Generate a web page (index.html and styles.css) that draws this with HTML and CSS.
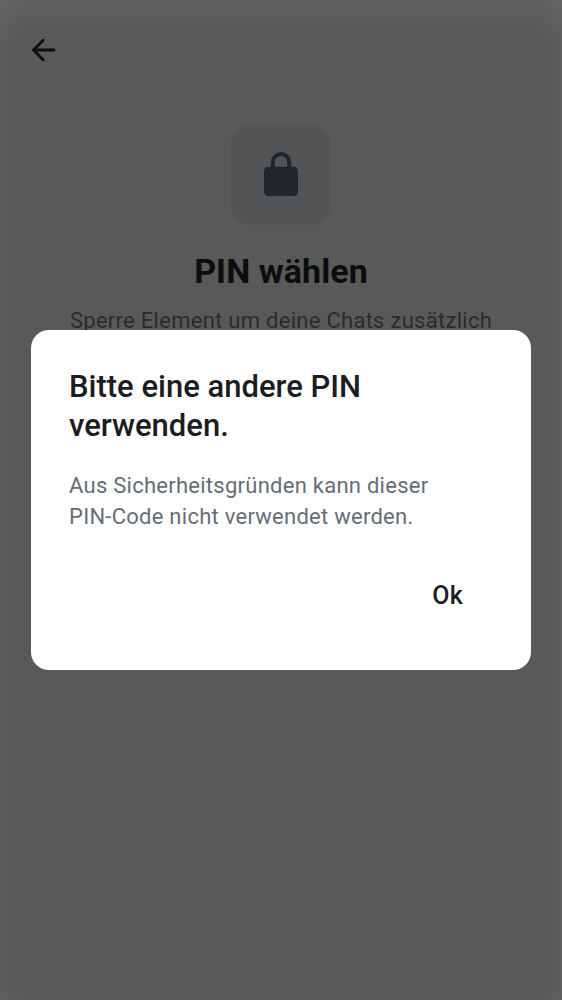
FILE: index.html
```
<!DOCTYPE html>
<html lang="de">
<head>
<meta charset="utf-8">
<title>PIN wählen</title>
<link rel="stylesheet" href="styles.css">
</head>
<body>
<main class="screen">
  <header class="topbar">
    <svg class="back" viewBox="0 0 28 28" aria-label="Zurück"><path d="M25 14H5M14.2 4.3L4.5 14l9.7 9.7"/></svg>
  </header>
  <section class="intro">
    <div class="tile">
      <svg class="lock" viewBox="0 0 34 44"><path class="shackle" d="M8.8 17V10.2a8.2 8.2 0 0 1 16.4 0V17"/><rect y="14.7" width="34" height="29.3" rx="4.5"/></svg>
    </div>
    <h1 class="title">PIN wählen</h1>
    <p class="subtitle">Sperre Element um deine Chats zusätzlich</p>
  </section>
</main>
<div class="scrim">
  <div class="dialog" role="alertdialog">
    <h2 class="heading">Bitte eine andere PIN<br>verwenden.</h2>
    <p class="message">Aus Sicherheitsgründen kann dieser<br>PIN-Code nicht verwendet werden.</p>
    <div class="actions"><button class="ok">Ok</button></div>
  </div>
</div>
</body>
</html>
```
FILE: styles.css
```
* { box-sizing: border-box; }
body { margin: 0; height: 1000px; overflow: hidden; font-family: Roboto, sans-serif; background: #595959; }
h1, h2, p { margin: 0; }
.screen {
  height: 1000px;
  background:
    linear-gradient(to bottom, rgba(255, 255, 255, .045), transparent 38px),
    linear-gradient(to right, rgba(255, 255, 255, .03), transparent 26px),
    linear-gradient(to left, rgba(255, 255, 255, .03), transparent 26px),
    linear-gradient(to top, rgba(255, 255, 255, .01), transparent 8px);
}
.topbar { height: 125px; padding: 36px 0 0 29px; }
.back { display: block; width: 28px; height: 28px; fill: none; stroke: #0c0e10; stroke-width: 2.9; stroke-linecap: round; stroke-linejoin: round; }
.intro { display: flex; flex-direction: column; align-items: center; }
.tile { width: 100px; height: 100px; border-radius: 21px; background: #535456; display: flex; align-items: center; justify-content: center; }
.lock { width: 34px; height: 44px; margin-top: -2px; fill: #222629; }
.shackle { fill: none; stroke: #222629; stroke-width: 4; }
.title { margin-top: 26px; font-size: 34px; line-height: 40px; font-weight: 700; letter-spacing: .08px; color: #0b0d0f; }
.subtitle { margin-top: 14px; font-size: 22px; line-height: 32px; letter-spacing: .28px; color: #282c30; white-space: nowrap; }
.scrim { position: absolute; inset: 0; display: flex; align-items: center; justify-content: center; }
.dialog { width: 500px; height: 340px; border-radius: 18px; background: #fff; padding: 37px 38px; }
.heading { font-size: 31px; line-height: 39px; font-weight: 500; color: #1b1d22; }
.message { margin-top: 25px; font-size: 22px; line-height: 31px; letter-spacing: .26px; color: #656d77; }
.actions { display: flex; justify-content: flex-end; padding: 48px 30px 0 0; }
.ok { border: 0; padding: 0; background: none; font: 500 25px/32px Roboto, sans-serif; color: #1b1d22; letter-spacing: .3px; }
```
